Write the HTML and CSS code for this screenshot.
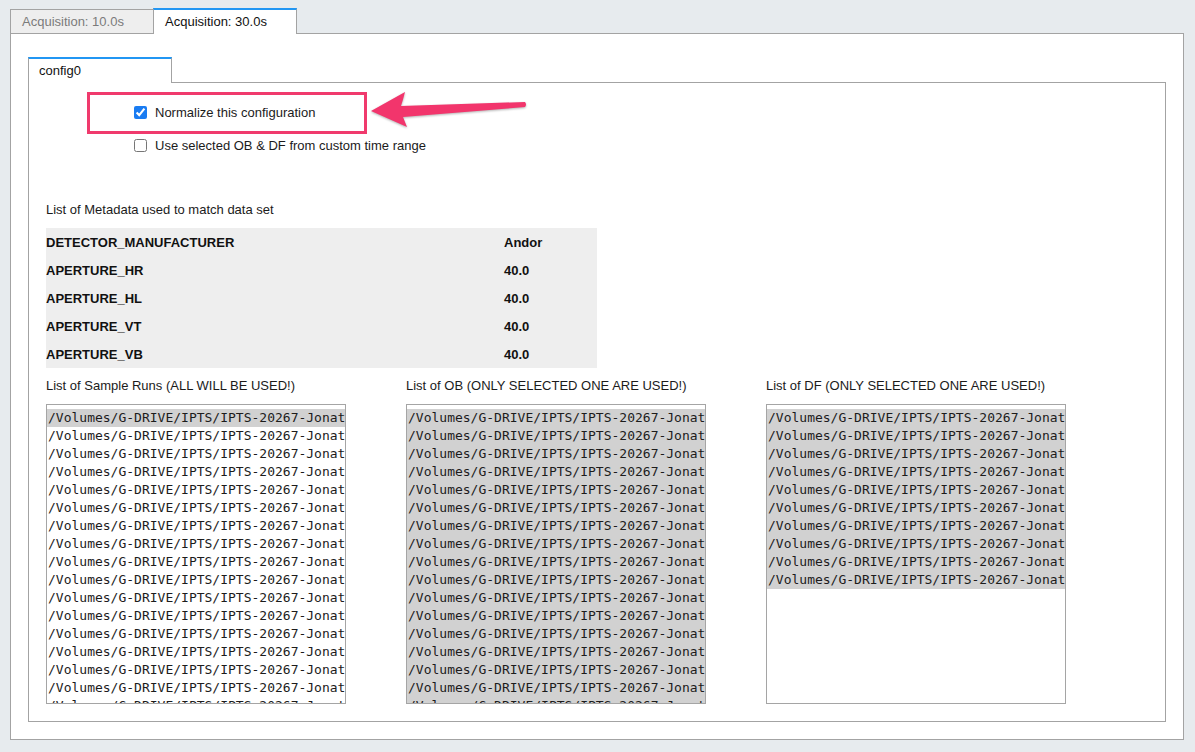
FILE: index.html
```html
<!DOCTYPE html>
<html>
<head>
<meta charset="utf-8">
<link rel="stylesheet" href="styles.css">
</head>
<body>
<div class="tabbar">
  <div class="tab">Acquisition: 10.0s</div>
  <div class="tab active">Acquisition: 30.0s</div>
</div>
<div class="panel outer">
  <div class="tabbar">
    <div class="tab active">config0</div>
  </div>
  <div class="panel inner">
    <div class="checks">
      <label class="check"><input type="checkbox" checked><span>Normalize this configuration</span></label>
      <label class="check"><input type="checkbox"><span>Use selected OB &amp; DF from custom time range</span></label>
    </div>
    <div class="highlight-box"></div>
    <svg class="arrow" width="170" height="46" viewBox="0 0 170 46">
      <path d="M6 23 L40 4 Q38 12 36 18 L160 14 Q162 16.5 160 19 L38 29 Q40 34 42 39 Z" fill="#f2356c"/>
    </svg>

    <div class="label meta-label">List of Metadata used to match data set</div>
    <table class="meta">
      <tr><td class="k">DETECTOR_MANUFACTURER</td><td class="v">Andor</td></tr>
      <tr><td class="k">APERTURE_HR</td><td class="v">40.0</td></tr>
      <tr><td class="k">APERTURE_HL</td><td class="v">40.0</td></tr>
      <tr><td class="k">APERTURE_VT</td><td class="v">40.0</td></tr>
      <tr><td class="k">APERTURE_VB</td><td class="v">40.0</td></tr>
    </table>

    <div class="lists">
      <div class="list-col">
        <div class="label">List of Sample Runs (ALL WILL BE USED!)</div>
        <div class="listbox">
          <div class="opt sel">/Volumes/G-DRIVE/IPTS/IPTS-20267-Jonat</div>
          <div class="opt">/Volumes/G-DRIVE/IPTS/IPTS-20267-Jonat</div>
          <div class="opt">/Volumes/G-DRIVE/IPTS/IPTS-20267-Jonat</div>
          <div class="opt">/Volumes/G-DRIVE/IPTS/IPTS-20267-Jonat</div>
          <div class="opt">/Volumes/G-DRIVE/IPTS/IPTS-20267-Jonat</div>
          <div class="opt">/Volumes/G-DRIVE/IPTS/IPTS-20267-Jonat</div>
          <div class="opt">/Volumes/G-DRIVE/IPTS/IPTS-20267-Jonat</div>
          <div class="opt">/Volumes/G-DRIVE/IPTS/IPTS-20267-Jonat</div>
          <div class="opt">/Volumes/G-DRIVE/IPTS/IPTS-20267-Jonat</div>
          <div class="opt">/Volumes/G-DRIVE/IPTS/IPTS-20267-Jonat</div>
          <div class="opt">/Volumes/G-DRIVE/IPTS/IPTS-20267-Jonat</div>
          <div class="opt">/Volumes/G-DRIVE/IPTS/IPTS-20267-Jonat</div>
          <div class="opt">/Volumes/G-DRIVE/IPTS/IPTS-20267-Jonat</div>
          <div class="opt">/Volumes/G-DRIVE/IPTS/IPTS-20267-Jonat</div>
          <div class="opt">/Volumes/G-DRIVE/IPTS/IPTS-20267-Jonat</div>
          <div class="opt">/Volumes/G-DRIVE/IPTS/IPTS-20267-Jonat</div>
          <div class="opt">/Volumes/G-DRIVE/IPTS/IPTS-20267-Jonat</div>
        </div>
      </div>
      <div class="list-col">
        <div class="label">List of OB (ONLY SELECTED ONE ARE USED!)</div>
        <div class="listbox">
          <div class="opt sel">/Volumes/G-DRIVE/IPTS/IPTS-20267-Jonat</div>
          <div class="opt sel">/Volumes/G-DRIVE/IPTS/IPTS-20267-Jonat</div>
          <div class="opt sel">/Volumes/G-DRIVE/IPTS/IPTS-20267-Jonat</div>
          <div class="opt sel">/Volumes/G-DRIVE/IPTS/IPTS-20267-Jonat</div>
          <div class="opt sel">/Volumes/G-DRIVE/IPTS/IPTS-20267-Jonat</div>
          <div class="opt sel">/Volumes/G-DRIVE/IPTS/IPTS-20267-Jonat</div>
          <div class="opt sel">/Volumes/G-DRIVE/IPTS/IPTS-20267-Jonat</div>
          <div class="opt sel">/Volumes/G-DRIVE/IPTS/IPTS-20267-Jonat</div>
          <div class="opt sel">/Volumes/G-DRIVE/IPTS/IPTS-20267-Jonat</div>
          <div class="opt sel">/Volumes/G-DRIVE/IPTS/IPTS-20267-Jonat</div>
          <div class="opt sel">/Volumes/G-DRIVE/IPTS/IPTS-20267-Jonat</div>
          <div class="opt sel">/Volumes/G-DRIVE/IPTS/IPTS-20267-Jonat</div>
          <div class="opt sel">/Volumes/G-DRIVE/IPTS/IPTS-20267-Jonat</div>
          <div class="opt sel">/Volumes/G-DRIVE/IPTS/IPTS-20267-Jonat</div>
          <div class="opt sel">/Volumes/G-DRIVE/IPTS/IPTS-20267-Jonat</div>
          <div class="opt sel">/Volumes/G-DRIVE/IPTS/IPTS-20267-Jonat</div>
          <div class="opt sel">/Volumes/G-DRIVE/IPTS/IPTS-20267-Jonat</div>
        </div>
      </div>
      <div class="list-col">
        <div class="label">List of DF (ONLY SELECTED ONE ARE USED!)</div>
        <div class="listbox">
          <div class="opt sel">/Volumes/G-DRIVE/IPTS/IPTS-20267-Jonat</div>
          <div class="opt sel">/Volumes/G-DRIVE/IPTS/IPTS-20267-Jonat</div>
          <div class="opt sel">/Volumes/G-DRIVE/IPTS/IPTS-20267-Jonat</div>
          <div class="opt sel">/Volumes/G-DRIVE/IPTS/IPTS-20267-Jonat</div>
          <div class="opt sel">/Volumes/G-DRIVE/IPTS/IPTS-20267-Jonat</div>
          <div class="opt sel">/Volumes/G-DRIVE/IPTS/IPTS-20267-Jonat</div>
          <div class="opt sel">/Volumes/G-DRIVE/IPTS/IPTS-20267-Jonat</div>
          <div class="opt sel">/Volumes/G-DRIVE/IPTS/IPTS-20267-Jonat</div>
          <div class="opt sel">/Volumes/G-DRIVE/IPTS/IPTS-20267-Jonat</div>
          <div class="opt sel">/Volumes/G-DRIVE/IPTS/IPTS-20267-Jonat</div>
        </div>
      </div>
    </div>
  </div>
</div>
</body>
</html>
```

FILE: styles.css
```css
* { box-sizing: border-box; }

html, body {
  margin: 0;
  background: #e7ebee;
}

body {
  padding: 8px 11px 0 10px;
  font-family: "Liberation Sans", Arial, sans-serif;
  font-size: 13px;
  color: #1b1b1b;
  width: 1195px;
  height: 752px;
  overflow: hidden;
}

.tabbar {
  display: flex;
  align-items: flex-end;
}

.tab {
  width: 144px;
  height: 24px;
  padding-left: 11px;
  line-height: 23px;
  background: #eeeeee;
  color: #7b7b7b;
  border: 1px solid #a3a3a3;
  border-bottom: none;
}

.tab.active {
  height: 26px;
  margin-left: -1px;
  margin-bottom: -1px;
  background: #ffffff;
  color: #111;
  border-top: 2px solid #2196f3;
  line-height: 23px;
  position: relative;
  z-index: 1;
}

.panel {
  background: #ffffff;
  border: 1px solid #a3a3a3;
}

.outer {
  height: 707px;
  padding: 23px 17px 17px 17px;
}

.outer .tab.active {
  margin-left: 0;
  padding-left: 10px;
}

.inner {
  position: relative;
  height: 640px;
  padding: 19px 17px 17px 17px;
}

.checks {
  display: flex;
  flex-direction: column;
  gap: 13px;
  padding-left: 88px;
}

.check {
  display: flex;
  align-items: center;
  gap: 8px;
  height: 20px;
}

.check span {
  padding-top: 1px;
}

.check input {
  margin: 0;
  width: 13px;
  height: 13px;
  accent-color: #1a7cf2;
}

.highlight-box {
  position: absolute;
  left: 58px;
  top: 9px;
  width: 280px;
  height: 42px;
  border: 3px solid #f03a6d;
}

.arrow {
  position: absolute;
  left: 336px;
  top: 5px;
  filter: drop-shadow(0 1px 1px rgba(0, 0, 0, 0.3));
}

.label {
  height: 20px;
  line-height: 20px;
}

.meta-label {
  margin-top: 45px;
}

.meta {
  margin-top: 8px;
  width: 551px;
  border-collapse: collapse;
  background: #eeeeee;
}

.meta td {
  height: 28px;
  padding: 0;
  font-weight: bold;
  color: #111;
}

.meta td.k {
  width: 458px;
}

.lists {
  margin-top: 8px;
  display: flex;
  gap: 60px;
}

.list-col {
  width: 300px;
  display: flex;
  flex-direction: column;
  gap: 8px;
}

.listbox {
  width: 300px;
  height: 300px;
  border: 1px solid #a5a5a5;
  padding-top: 4px;
  overflow: hidden;
  background: #fff;
}

.opt {
  height: 18px;
  line-height: 18px;
  padding-left: 1px;
  font-family: "DejaVu Sans Mono", "Liberation Mono", monospace;
  font-size: 13px;
  color: #1c1c1c;
  white-space: nowrap;
  overflow: hidden;
}

.opt.sel {
  background: #d1d1d1;
}
```
